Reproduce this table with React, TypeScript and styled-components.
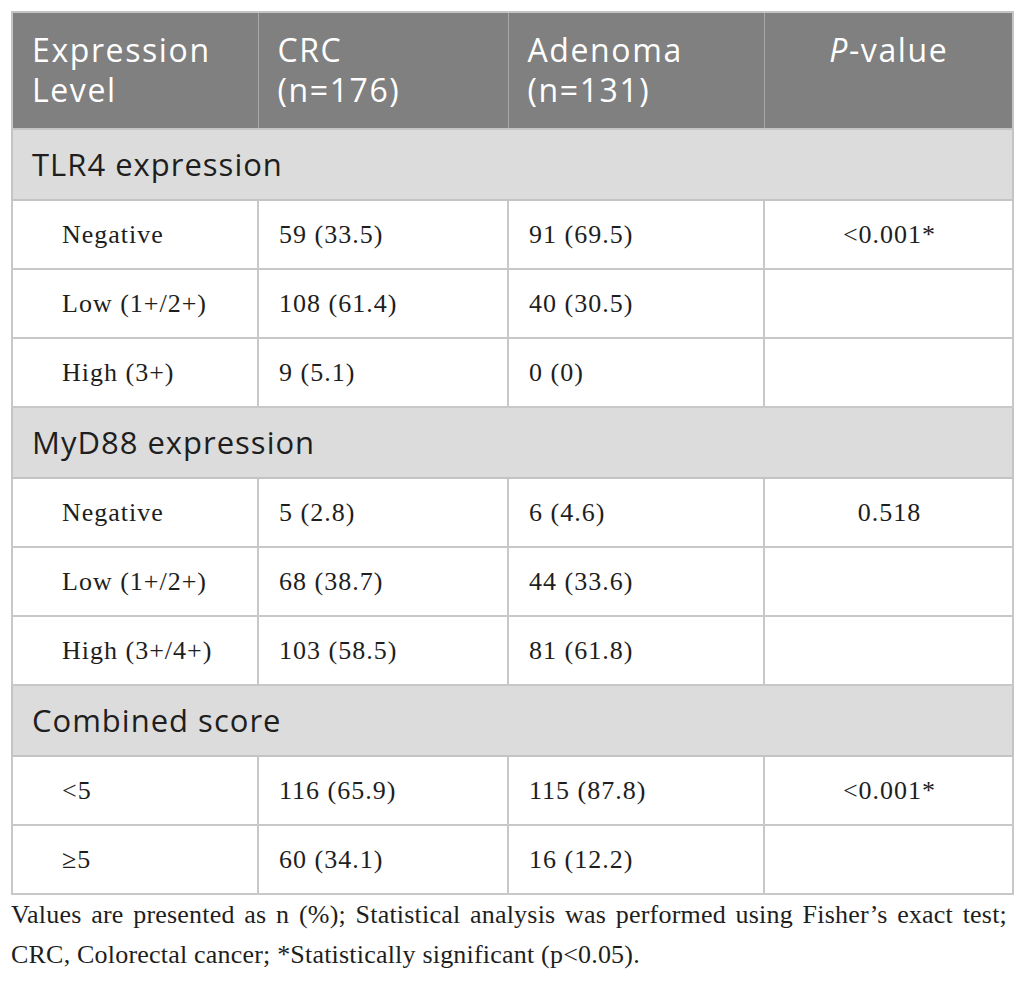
import React from 'react';
import styled, { createGlobalStyle } from 'styled-components';

const GlobalStyle = createGlobalStyle`
  body {
    margin: 0;
    background: #ffffff;
  }
`;

const Page = styled.div`
  padding: 11px 15px 0 11px;
  width: 1000px;
`;

const Table = styled.table`
  width: 1001px;
  border-collapse: collapse;
  table-layout: fixed;
  border: 2px solid #c4c4c4;
`;

const HeadCell = styled.th<{ center?: boolean }>`
  background: #808080;
  color: #ffffff;
  font-family: 'Open Sans', sans-serif;
  font-weight: 400;
  font-size: 32px;
  letter-spacing: 1.6px;
  line-height: 40px;
  text-align: ${({ center }) => (center ? 'center' : 'left')};
  vertical-align: top;
  padding: 17px 18px 18px 19px;
  border-right: 1px solid #a8a8a8;
  height: 80px;
`;

const SectionCell = styled.td`
  background: #dcdcdc;
  color: #1e1e1e;
  font-family: 'Open Sans', sans-serif;
  font-size: 31px;
  letter-spacing: 1px;
  line-height: 40px;
  padding: 14px 19px 15px 19px;
  border-top: 2px solid #c4c4c4;
  border-bottom: 2px solid #c4c4c4;
`;

const Cell = styled.td<{ center?: boolean; indent?: boolean }>`
  font-family: 'Liberation Serif', serif;
  font-size: 26px;
  letter-spacing: 1px;
  color: #1e1e1e;
  height: 67px;
  padding: 0 18px 0 ${({ indent }) => (indent ? '49px' : '20px')};
  text-align: ${({ center }) => (center ? 'center' : 'left')};
  vertical-align: middle;
  border: 2px solid #c8c8c8;
`;

const Note = styled.div`
  margin: 0 4px 0 0;
  font-family: 'Liberation Serif', serif;
  font-size: 26px;
  letter-spacing: 0.2px;
  line-height: 40px;
  color: #1e1e1e;
`;

const NoteLine = styled.div<{ justify?: boolean }>`
  text-align: ${({ justify }) => (justify ? 'justify' : 'left')};
  text-align-last: ${({ justify }) => (justify ? 'justify' : 'left')};
  white-space: nowrap;
`;

type Row = [string, string, string, string];

const sections: { title: string; rows: Row[] }[] = [
  {
    title: 'TLR4 expression',
    rows: [
      ['Negative', '59 (33.5)', '91 (69.5)', '<0.001*'],
      ['Low (1+/2+)', '108 (61.4)', '40 (30.5)', ''],
      ['High (3+)', '9 (5.1)', '0 (0)', ''],
    ],
  },
  {
    title: 'MyD88 expression',
    rows: [
      ['Negative', '5 (2.8)', '6 (4.6)', '0.518'],
      ['Low (1+/2+)', '68 (38.7)', '44 (33.6)', ''],
      ['High (3+/4+)', '103 (58.5)', '81 (61.8)', ''],
    ],
  },
  {
    title: 'Combined score',
    rows: [
      ['<5', '116 (65.9)', '115 (87.8)', '<0.001*'],
      ['\u22655', '60 (34.1)', '16 (12.2)', ''],
    ],
  },
];

export default function App() {
  return (
    <Page>
      <GlobalStyle />
      <Table>
        <colgroup>
          <col style={{ width: 246 }} />
          <col style={{ width: 250 }} />
          <col style={{ width: 256 }} />
          <col style={{ width: 249 }} />
        </colgroup>
        <thead>
          <tr>
            <HeadCell>Expression Level</HeadCell>
            <HeadCell>CRC<br />(n=176)</HeadCell>
            <HeadCell>Adenoma<br />(n=131)</HeadCell>
            <HeadCell center>
              <i>P</i>-value
            </HeadCell>
          </tr>
        </thead>
        <tbody>
          {sections.map((s) => (
            <React.Fragment key={s.title}>
              <tr>
                <SectionCell colSpan={4}>{s.title}</SectionCell>
              </tr>
              {s.rows.map((r) => (
                <tr key={s.title + r[0]}>
                  <Cell indent>{r[0]}</Cell>
                  <Cell>{r[1]}</Cell>
                  <Cell>{r[2]}</Cell>
                  <Cell center>{r[3]}</Cell>
                </tr>
              ))}
            </React.Fragment>
          ))}
        </tbody>
      </Table>
      <Note>
        <NoteLine justify>
          Values are presented as n (%); Statistical analysis was performed using Fisher’s exact test;
        </NoteLine>
        <NoteLine>CRC, Colorectal cancer; *Statistically significant (p&lt;0.05).</NoteLine>
      </Note>
    </Page>
  );
}
